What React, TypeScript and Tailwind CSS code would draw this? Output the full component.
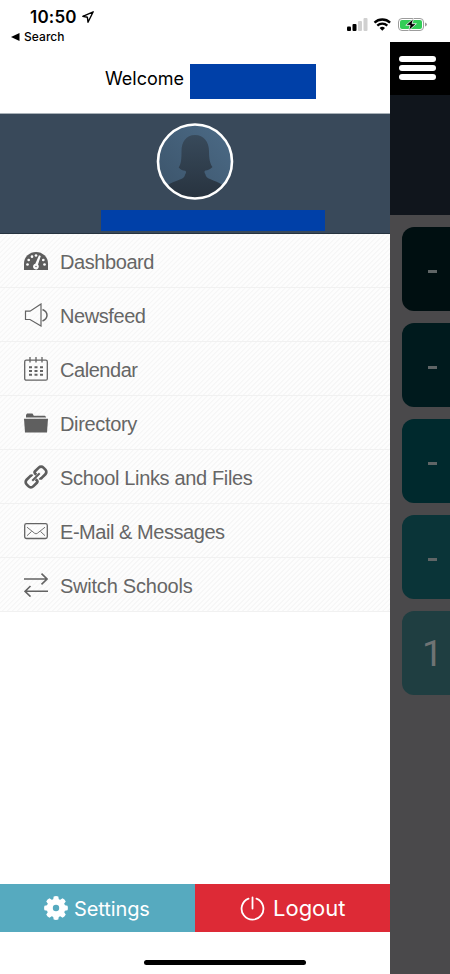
import type { ReactNode } from "react";

const sans = "font-['Liberation_Sans',Arial,sans-serif]";
const inter = "font-['Inter',sans-serif]";

export default function App() {
  return (
    <main className={`relative flex h-[974px] w-[450px] flex-col overflow-hidden bg-white text-black ${sans}`}>
      <StatusBar />

      <div className="flex flex-1">
        <aside className="flex w-[390px] flex-col bg-white">
          <header className={`flex h-[71px] items-center pt-[2px] pl-[105px] text-[18px] ${inter}`}>
            <span className="w-[85px] whitespace-nowrap">Welcome</span>
            <span className="mt-[6px] h-[35px] w-[126px] bg-[#0040a8]" />
          </header>

          <section className="flex h-[121px] flex-col items-center border-y border-t-[#a9b1b8] border-b-[#26333f] bg-[#39495a] pt-[9px]">
            <Avatar />
            <div className="mt-[10px] ml-[35px] h-[21px] w-[224px] shrink-0 bg-[#0040a8]" />
          </section>

          <nav className="bg-[repeating-linear-gradient(135deg,#fdfdfd_0px,#fdfdfd_1.8px,#f6f6f6_2.4px,#f6f6f6_3px,#fdfdfd_3.54px)]">
            <MenuItem label="Dashboard" spacing="tracking-[-0.42px]" icon={<GaugeIcon />} />
            <MenuItem label="Newsfeed" spacing="tracking-[-0.42px]" icon={<SpeakerIcon />} />
            <MenuItem label="Calendar" spacing="tracking-[-0.45px]" icon={<CalendarIcon />} />
            <MenuItem label="Directory" spacing="tracking-[-0.35px]" icon={<FolderIcon />} />
            <MenuItem label="School Links and Files" spacing="tracking-[-0.35px]" icon={<LinkIcon />} />
            <MenuItem label="E-Mail & Messages" spacing="tracking-[-0.45px]" icon={<MailIcon />} />
            <MenuItem label="Switch Schools" spacing="tracking-[-0.23px]" icon={<SwitchIcon />} />
          </nav>

          <footer className={`mt-auto mb-[42px] grid h-[48px] grid-cols-2 text-white ${inter}`}>
            <button className="flex items-center bg-[#56aabf] pl-[44px] text-[20px]">
              <GearIcon />
              <span className="mt-px ml-[6px] tracking-[-0.1px]">Settings</span>
            </button>
            <button className="flex items-center bg-[#dd2a36] pl-[45px] text-[22px]">
              <PowerIcon />
              <span className="mt-px ml-[8px]">Logout</span>
            </button>
          </footer>
        </aside>

        <section className="flex w-[60px] flex-col bg-[#4a494b]">
          <div className="flex h-[53px] flex-col gap-[3.5px] bg-black pt-[14px] pl-[9px]">
            <span className="h-[5.6px] w-[37px] rounded-full bg-white" />
            <span className="h-[5.6px] w-[37px] rounded-full bg-white" />
            <span className="h-[5.6px] w-[37px] rounded-full bg-white" />
          </div>
          <div className="h-[120px] bg-[#10151c]" />
          <div className="flex flex-col gap-3 pt-[11.5px] pl-3">
            <Tile color="bg-[#000f11]" />
            <Tile color="bg-[#001a1d]" />
            <Tile color="bg-[#00292d]" />
            <Tile color="bg-[#0a3438]" />
            <Tile color="bg-[#1f3e41]" count="1" />
          </div>
        </section>
      </div>

      <div className="absolute bottom-[9px] left-[144px] h-[5px] w-[162px] rounded-full bg-black" />
    </main>
  );
}

function StatusBar() {
  return (
    <div className={`flex h-[42px] justify-between ${inter}`}>
      <div>
        <div className="flex h-[32px] items-center pt-[3px] pl-[30px] text-[17px] font-semibold">
          <span className="w-[52px] whitespace-nowrap tracking-[0.2px]">10:50</span>
          <svg width="12" height="12" viewBox="0 0 12 12" className="-mt-[2px]" fill="none" stroke="black" strokeWidth="1.4" strokeLinejoin="round">
            <path d="M11.2.8.8 5.3 5.4 6.3 6 11.2Z" />
          </svg>
        </div>
        <div className="flex h-[10px] items-center pl-[11px] text-[12px] font-medium">
          <svg width="9" height="8" viewBox="0 0 9 8">
            <path d="M0 4 8.5 0V8Z" />
          </svg>
          <span className="ml-[4px] tracking-[0.05px]">Search</span>
        </div>
      </div>

      <svg className="mt-[16px] mr-[22px]" width="82" height="17" viewBox="0 0 82 17">
        <rect x="1" y="10.5" width="4" height="4.5" rx="1" />
        <rect x="6.5" y="8" width="4" height="7" rx="1" />
        <rect x="12" y="5" width="4" height="10" rx="1" fill="#d0d0d0" />
        <rect x="17.5" y="2" width="4" height="13" rx="1" fill="#d0d0d0" />
        <g fill="none" stroke="black" strokeWidth="2.3">
          <path d="M28.500 6.600a11.300 11.300 0 0 1 15.600 0" />
          <path d="M31.300 9.700a7.300 7.300 0 0 1 10 0" />
        </g>
        <path d="M36.300 14.800 33.600 12.100a3.900 3.900 0 0 1 5.400 0Z" />
        <rect x="52.5" y="2.5" width="25" height="12" rx="3.5" fill="white" stroke="#9c9c9c" />
        <rect x="54" y="4" width="22" height="9" rx="2" fill="#32cd57" />
        <path d="M79 6.500v4c1.300-.5 2-1.200 2-2s-.7-1.500-2-2Z" fill="#9c9c9c" />
        <path d="M67.500 2.500 59.800 9.300h4.300L62.700 14.500l7.700-6.800h-4.300Z" stroke="white" strokeWidth=".8" />
      </svg>
    </div>
  );
}

function Avatar() {
  return (
    <svg width="78" height="77" viewBox="0 0 78 77" className="shrink-0">
      <defs>
        <linearGradient id="sky" x1="0" y1="1" x2="1" y2="0">
          <stop offset="0" stopColor="#3b5369" />
          <stop offset="1" stopColor="#4c6b87" />
        </linearGradient>
        <linearGradient id="figure" x1="0" y1="0" x2="0" y2="1">
          <stop offset="0" stopColor="#384a5b" />
          <stop offset="1" stopColor="#27323e" />
        </linearGradient>
        <clipPath id="round">
          <circle cx="39" cy="38.5" r="36.5" />
        </clipPath>
      </defs>
      <circle cx="39" cy="38.5" r="37" fill="url(#sky)" />
      <path
        clipPath="url(#round)"
        fill="url(#figure)"
        d="M39 12c-9 0-13.500 7-13.500 16 0 8-.3 13-2.800 16.500 2 2.300 4.200 3 6.300 3.300 1.500.5 1.200 2.200.2 3.500-.7 3-2 4-4.700 5-5 2-9.500 3.500-13 6V77h55V62c-3.500-2.500-8-4-12.500-6-2.700-1-4-2-4.700-5-1-1.300-1.300-3 .2-3.500 2.300-.3 4.800-1 7-3.500-2.500-3.500-3.500-8-3.500-16 0-9-5-16-14-16Z"
      />
      <circle cx="39" cy="38.5" r="37" fill="none" stroke="white" strokeWidth="2.6" />
    </svg>
  );
}

function MenuItem({ label, icon, spacing }: { label: string; icon: ReactNode; spacing: string }) {
  return (
    <a className="flex h-[54px] items-center border-b border-[#f1f1f1] pl-[24px] text-[#666]">
      {icon}
      <span className={`ml-[12px] pt-[2px] text-[20px] whitespace-nowrap ${spacing}`}>{label}</span>
    </a>
  );
}

function Tile({ color, count }: { color: string; count?: string }) {
  return (
    <div className={`flex h-[84px] items-center rounded-l-xl text-[#6f7374] ${color}`}>
      {count ? (
        <span className="pt-[2px] pl-[20px] font-['Roboto',sans-serif] text-[37px]">{count}</span>
      ) : (
        <span className="mt-[6px] ml-[26px] h-[3px] w-[9px] bg-[#5f6566]" />
      )}
    </div>
  );
}

function GaugeIcon() {
  return (
    <svg width="24" height="24" viewBox="0 0 24 24" fill="#5d5d5d">
      <path d="M0 21v-6.500a12 11.500 0 0 1 24 0V21Z" />
      <g fill="#fcfcfc">
        <circle cx="3.5" cy="15.5" r="1.35" />
        <circle cx="4.7" cy="11" r="1.35" />
        <circle cx="8" cy="7.7" r="1.35" />
        <circle cx="12" cy="6.5" r="1.35" />
        <circle cx="19.3" cy="11" r="1.35" />
        <circle cx="20.5" cy="15.5" r="1.35" />
        <path d="M15 6.300 16.800 7 14 15.500a2.900 2.900 0 1 1-2.700-.8Z" />
      </g>
      <circle cx="12" cy="17.5" r=".7" />
    </svg>
  );
}

function SpeakerIcon() {
  return (
    <svg width="24" height="24" viewBox="0 0 24 24" fill="none" stroke="#636363" strokeWidth="1.2">
      <path d="M1.500 8.200H6L17 1V23L6 16.500H1.500Z" />
      <path d="M18.500 6.500c6 2.500 6 9 0 11.500" strokeWidth="1.5" />
    </svg>
  );
}

function CalendarIcon() {
  return (
    <svg width="24" height="24" viewBox="0 0 24 24" fill="none" stroke="#636363">
      <rect x=".7" y="3.2" width="22.6" height="20" rx="1.5" strokeWidth="1.3" />
      <path d="M6 0v5.500M12 0v5.500M18 0v5.500" strokeWidth="1.3" />
      <path d="M5 10.300h14M5 14h14M5 17.700h14" strokeWidth="2" strokeDasharray="3 2.5" />
    </svg>
  );
}

function FolderIcon() {
  return (
    <svg width="24" height="24" viewBox="0 0 24 24" fill="#5f5f5f">
      <path d="M2 6.500V4l1-1.500h5.500l1.300 2.300H21L22 6v.5Z" />
      <path d="M0 7.800h24l-1 13.700H1Z" />
    </svg>
  );
}

function LinkIcon() {
  return (
    <svg width="24" height="24" viewBox="0 0 24 24" fill="none" stroke="#5d5d5d" strokeWidth="2.7">
      <path d="m12.300 9.700-1.200-1.200a1.600 1.600 0 0 1 0-2.200L14.800 2.600a3.300 3.300 0 0 1 4.600 0l2 2a3.300 3.300 0 0 1 0 4.600L17.700 12.900a1.600 1.600 0 0 1-2.200 0" />
      <path d="m11.700 14.300 1.200 1.200a1.600 1.600 0 0 1 0 2.200L9.200 21.400a3.300 3.300 0 0 1-4.600 0l-2-2a3.300 3.300 0 0 1 0-4.600L6.300 11.100a1.600 1.600 0 0 1 2.200 0" />
      <path d="m8.300 15.700 7.400-7.400" strokeWidth="2" />
    </svg>
  );
}

function MailIcon() {
  return (
    <svg width="24" height="24" viewBox="0 0 24 24" fill="none" stroke="#636363">
      <rect x=".7" y="4.7" width="22.6" height="14.8" rx="1.8" strokeWidth="1.3" />
      <path d="M3 8.200 10.700 14.300a2 2 0 0 0 2.600 0L21 8.200M3 16.700 7.500 12.500M21 16.700 16.500 12.500" strokeWidth=".9" />
    </svg>
  );
}

function SwitchIcon() {
  return (
    <svg width="24" height="24" viewBox="0 0 24 24" fill="none" stroke="#636363" strokeWidth="1.6">
      <path d="M0 6h23M17.500.7 23 6l-5.500 5.300M24 18.300H1M6.500 13 1 18.300l5.500 5.300" />
    </svg>
  );
}

function GearIcon() {
  return (
    <svg width="24" height="24" viewBox="0 0 24 24">
      <g fill="white">
        <circle cx="12" cy="12" r="9.3" />
        <path d="M9 4.500 9.700.5Q12-.3 14.300.5L15 4.500ZM9 19.500 9.700 23.500Q12 24.300 14.300 23.500L15 19.500ZM4.500 9 .5 9.700Q-.3 12 .5 14.300L4.500 15ZM19.500 9 23.500 9.700Q24.300 12 23.500 14.300L19.500 15Z" />
        <path
          transform="rotate(45 12 12)"
          d="M9 4.500 9.700.5Q12-.3 14.300.5L15 4.500ZM9 19.500 9.700 23.500Q12 24.300 14.300 23.500L15 19.500ZM4.500 9 .5 9.700Q-.3 12 .5 14.300L4.500 15ZM19.500 9 23.500 9.700Q24.300 12 23.500 14.300L19.500 15Z"
        />
      </g>
      <circle cx="12" cy="12" r="3.2" fill="#56aabf" />
    </svg>
  );
}

function PowerIcon() {
  return (
    <svg width="25" height="25" viewBox="0 0 25 25" fill="none" stroke="white" strokeWidth="1.8" strokeLinecap="round">
      <path d="M12.500 1.500v11M8.500 2.600a10.900 10.900 0 1 0 8 0" />
    </svg>
  );
}
